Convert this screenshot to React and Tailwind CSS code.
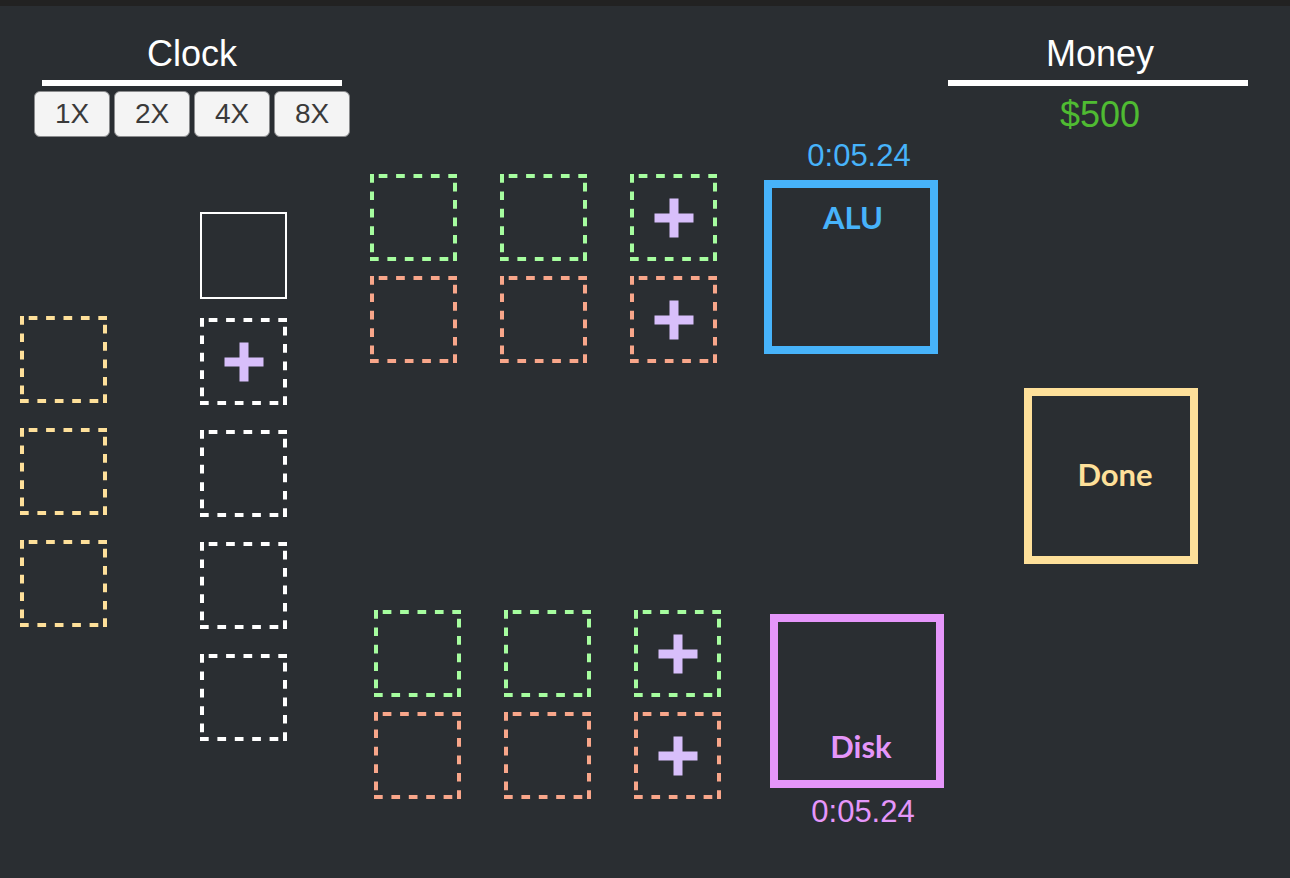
import React from "react";

function Dashes({ className }) {
  const dash = { strokeWidth: 4, strokeDasharray: "8.7" };
  return (
    <svg
      viewBox="0 0 87 87"
      fill="none"
      stroke="currentColor"
      aria-hidden="true"
      className={`col-start-1 row-start-1 size-full ${className}`}
    >
      <path d="M2 0V87M0 85H87" {...dash} />
      <path d="M0 2H87M85 0V87" {...dash} strokeDashoffset="8.7" />
    </svg>
  );
}

function Slot({ color, onAdd = false }) {
  return (
    <div className="grid size-[87px] shrink-0 place-items-center">
      <Dashes className={color} />
      {onAdd && (
        <button type="button" aria-label="Add slot" className="col-start-1 row-start-1 size-10 cursor-pointer">
          <svg viewBox="0 0 40 40" fill="#d8bffb" aria-hidden="true" className="size-10">
            <path d="M0.5 15.5H39.5V24.5H0.5ZM15.5 0.5H24.5V39.5H15.5Z" />
          </svg>
        </button>
      )}
    </div>
  );
}

function Queues({ className }) {
  return (
    <div className={`grid grid-cols-3 gap-x-[43px] gap-y-[15px] ${className}`}>
      <Slot color="text-[#a6fd9f]" />
      <Slot color="text-[#a6fd9f]" />
      <Slot color="text-[#a6fd9f]" onAdd />
      <Slot color="text-[#f8a68a]" />
      <Slot color="text-[#f8a68a]" />
      <Slot color="text-[#f8a68a]" onAdd />
    </div>
  );
}

function Stage({ label, className }) {
  return (
    <div
      className={`flex w-[174px] justify-center border-8 border-current font-['Lato',sans-serif] text-[31px] leading-10 font-bold ${className}`}
    >
      {label}
    </div>
  );
}

const speeds = ["1X", "2X", "4X", "8X"];

export default function App() {
  return (
    <div className="min-h-screen border-t-[6px] border-[#222222] bg-[#2a2e32] font-['Liberation_Sans',Arial,sans-serif] text-white">
      <header className="flex items-start justify-between pt-7 pr-[42px] pl-[34px]">
        <section>
          <h2 className="text-center text-4xl leading-10">Clock</h2>
          <div className="mx-2 mt-1.5 h-1.5 bg-white" />
          <div className="mt-[5px] flex gap-1">
            {speeds.map((speed) => (
              <button
                key={speed}
                type="button"
                className="h-[46px] w-[76px] cursor-pointer rounded-md border border-[#8b8c8e] bg-[#f4f4f4] text-[28px] leading-8 text-[#3a3a3a]"
              >
                {speed}
              </button>
            ))}
          </div>
        </section>
        <section className="w-[300px] text-center text-4xl leading-10">
          <h2 className="pl-1">Money</h2>
          <div className="mt-1.5 h-1.5 bg-white" />
          <p className="mt-[9px] pl-1 text-[#4fbb32]">$500</p>
        </section>
      </header>

      <main className="flex items-start pr-[92px] pb-10 pl-5">
        <div className="flex flex-col gap-[25px] pt-[179px]">
          <Slot color="text-[#fee09a]" />
          <Slot color="text-[#fee09a]" />
          <Slot color="text-[#fee09a]" />
        </div>

        <div className="ml-[93px] pt-[75px]">
          <div className="size-[87px] border-2 border-white" />
          <div className="mt-[19px] flex flex-col gap-[25px]">
            <Slot color="text-white" onAdd />
            <Slot color="text-white" />
            <Slot color="text-white" />
            <Slot color="text-white" />
          </div>
        </div>

        <div className="ml-[83px]">
          <section className="flex items-start gap-[47px]">
            <Queues className="pt-[37px]" />
            <div className="text-[#47b3fa]">
              <p className="pl-4 text-center text-[31px] leading-[38px]">0:05.24</p>
              <Stage label="ALU" className="mt-[5px] h-[174px] items-start pt-[9px] pl-1" />
            </div>
          </section>
          <section className="mt-[247px] flex items-start gap-[49px] pl-1">
            <Queues />
            <div className="pt-1 text-[#e596fa]">
              <Stage label="Disk" className="h-[174px] items-end pb-3.5 pl-2" />
              <p className="mt-[5px] pl-3 text-center text-[31px] leading-[38px]">0:05.24</p>
            </div>
          </section>
        </div>

        <div className="ml-auto pt-[251px] text-[#fee09a]">
          <Stage label="Done" className="h-[176px] items-center pb-1 pl-2" />
        </div>
      </main>
    </div>
  );
}
